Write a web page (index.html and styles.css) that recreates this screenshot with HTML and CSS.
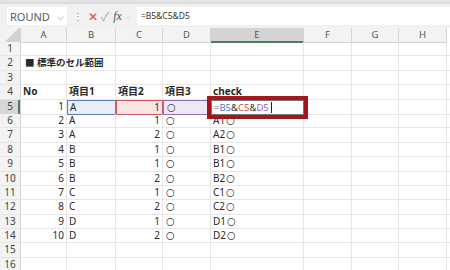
FILE: index.html
```html
<!DOCTYPE html>
<html lang="ja">
<head>
  <meta charset="utf-8">
  <title>標準のセル範囲</title>
  <link rel="stylesheet" href="styles.css">
</head>
<body>
  <div class="ribbon-edge"></div>
  <div class="formula-bar">
    <div class="name-box"><span>ROUND</span><span class="chev">⌵</span></div>
    <span class="dots">⋮</span>
    <span class="cancel">✕</span>
    <span class="enter">✓</span>
    <span class="fx">fx</span>
    <span class="chev small">⌵</span>
    <div class="formula-input">=B5&amp;C5&amp;D5</div>
  </div>
  <div class="sheet">
    <div class="row head">
      <div class="corner"></div><div>A</div><div>B</div><div>C</div><div>D</div><div class="active">E</div><div>F</div><div>G</div><div>H</div><div></div>
    </div>
    <div class="row"><div class="rh">1</div><div></div><div></div><div></div><div></div><div></div><div></div><div></div><div></div><div></div></div>
    <div class="row"><div class="rh">2</div><div class="title">■ 標準のセル範囲</div><div></div><div></div><div></div><div></div><div></div><div></div><div></div><div></div></div>
    <div class="row"><div class="rh">3</div><div></div><div></div><div></div><div></div><div></div><div></div><div></div><div></div><div></div></div>
    <div class="row bold"><div class="rh">4</div><div>No</div><div>項目1</div><div>項目2</div><div>項目3</div><div>check</div><div></div><div></div><div></div><div></div></div>
    <div class="row current">
      <div class="rh">5</div><div class="num">1</div><div class="ref-b">A</div><div class="num ref-c">1</div><div class="ref-d"><span class="o">〇</span></div>
      <div class="editing">
        <span class="dim">=</span><span class="c-b">B5</span>&amp;<span class="c-c">C5</span>&amp;<span class="c-d">D5</span><span class="caret"></span>
        <div class="callout"></div>
      </div>
      <div></div><div></div><div></div><div></div>
    </div>
    <div class="row"><div class="rh">6</div><div class="num">2</div><div>A</div><div class="num">1</div><div><span class="o">〇</span></div><div>A1<span class="o">〇</span></div><div></div><div></div><div></div><div></div></div>
    <div class="row"><div class="rh">7</div><div class="num">3</div><div>A</div><div class="num">2</div><div><span class="o">〇</span></div><div>A2<span class="o">〇</span></div><div></div><div></div><div></div><div></div></div>
    <div class="row"><div class="rh">8</div><div class="num">4</div><div>B</div><div class="num">1</div><div><span class="o">〇</span></div><div>B1<span class="o">〇</span></div><div></div><div></div><div></div><div></div></div>
    <div class="row"><div class="rh">9</div><div class="num">5</div><div>B</div><div class="num">1</div><div><span class="o">〇</span></div><div>B1<span class="o">〇</span></div><div></div><div></div><div></div><div></div></div>
    <div class="row"><div class="rh">10</div><div class="num">6</div><div>B</div><div class="num">2</div><div><span class="o">〇</span></div><div>B2<span class="o">〇</span></div><div></div><div></div><div></div><div></div></div>
    <div class="row"><div class="rh">11</div><div class="num">7</div><div>C</div><div class="num">1</div><div><span class="o">〇</span></div><div>C1<span class="o">〇</span></div><div></div><div></div><div></div><div></div></div>
    <div class="row"><div class="rh">12</div><div class="num">8</div><div>C</div><div class="num">2</div><div><span class="o">〇</span></div><div>C2<span class="o">〇</span></div><div></div><div></div><div></div><div></div></div>
    <div class="row"><div class="rh">13</div><div class="num">9</div><div>D</div><div class="num">1</div><div><span class="o">〇</span></div><div>D1<span class="o">〇</span></div><div></div><div></div><div></div><div></div></div>
    <div class="row"><div class="rh">14</div><div class="num">10</div><div>D</div><div class="num">2</div><div><span class="o">〇</span></div><div>D2<span class="o">〇</span></div><div></div><div></div><div></div><div></div></div>
    <div class="row"><div class="rh">15</div><div></div><div></div><div></div><div></div><div></div><div></div><div></div><div></div><div></div></div>
    <div class="row"><div class="rh">16</div><div></div><div></div><div></div><div></div><div></div><div></div><div></div><div></div><div></div></div>
  </div>
</body>
</html>
```
FILE: styles.css
```css
html, body { margin: 0; height: 100%; overflow: hidden; background: #fff; }
body { font-family: "Noto Sans", "Noto Sans CJK JP", sans-serif; font-size: 10px; color: #2a2a2a; }

.ribbon-edge { height: 4px; background: linear-gradient(#e6e6e6, #d8d8d8); }
.formula-bar { display: flex; align-items: center; height: 24px; background: #f1f1f1; padding-left: 7px; color: #666; }
.name-box { display: flex; align-items: center; justify-content: space-between; width: 60px; height: 18px; background: #fff; box-sizing: border-box; padding: 0 3px; font-size: 11px; color: #5a5a5a; }
.chev { font-size: 9px; color: #888; line-height: 1; }
.chev.small { font-size: 7px; margin-left: 3px; }
.dots { margin-left: 6px; font-size: 10px; color: #888; }
.cancel { margin-left: 5px; color: #d84a4a; font-size: 12px; }
.enter { margin-left: 3px; color: #aaa; font-size: 12px; }
.fx { margin-left: 4px; font-family: "Liberation Serif", serif; font-style: italic; font-size: 12px; color: #555; }
.formula-input { flex: 1; height: 18px; margin-left: 7px; background: #fff; font-size: 8.5px; line-height: 18px; padding-left: 4px; color: #333; }

.sheet { --cols: 21px 46px 49px 47px 48px 93px 48px 47px 48px 1fr; }
.row { display: grid; grid-template-columns: var(--cols); height: 14.4px; }
.row > div { border-right: 1px solid #e6e6e6; border-bottom: 1px solid #e6e6e6; box-sizing: border-box; padding: 0 2px; line-height: 13px; white-space: nowrap; overflow: visible; }
.row > .rh { background: #f3f3f3; border-right-color: #d2d2d2; text-align: center; color: #444; font-size: 10px; padding: 0; }
.o { font-family: "Noto Sans CJK JP", sans-serif; font-size: 8.5px; font-weight: normal; margin-left: 1px; color: #444; }

.head { height: 14px; }
.head > div { background: #f3f3f3; border-right-color: #d6d6d6; border-bottom-color: #d2d2d2; text-align: center; color: #555; font-size: 9.5px; }
.head > .corner { background: linear-gradient(135deg, #f3f3f3 55%, #d2d2d2 56%); }
.head > .active { background: #d4d4d4; border-bottom: 2px solid #4b7d5e; }
.head > div:last-child { background: #fff; border: none; }

.title { font-weight: bold; padding-left: 4px !important; font-size: 9.5px; }
.bold > div { font-weight: bold; }
.bold > .rh { font-weight: normal; }
.num { text-align: right; }

.current > .rh { background: #d6d6d6; box-shadow: inset -2px 0 #4b7d5e; }
.row > .ref-b { background: #e9edf7; border: 1px solid #5d7fbd; }
.row > .ref-c { background: #fbe4e4; border: 1px solid #cc5a5f; }
.row > .ref-d { background: #eee7f4; border: 1px solid #9070b4; }

.row > .editing { position: relative; background: #fff; border: 1px solid #777; padding-left: 2px; color: #333; font-size: 9.5px; }
.dim { color: #666; }
.c-b { color: #4a78c4; }
.c-c { color: #cf5252; }
.c-d { color: #9168bb; }
.caret { display: inline-block; width: 1px; height: 11px; background: #222; vertical-align: -2px; margin-left: 2px; }
.callout { position: absolute; left: -5px; top: -5px; right: -5px; bottom: -5px; border: 4px solid #a3161c; }
```
